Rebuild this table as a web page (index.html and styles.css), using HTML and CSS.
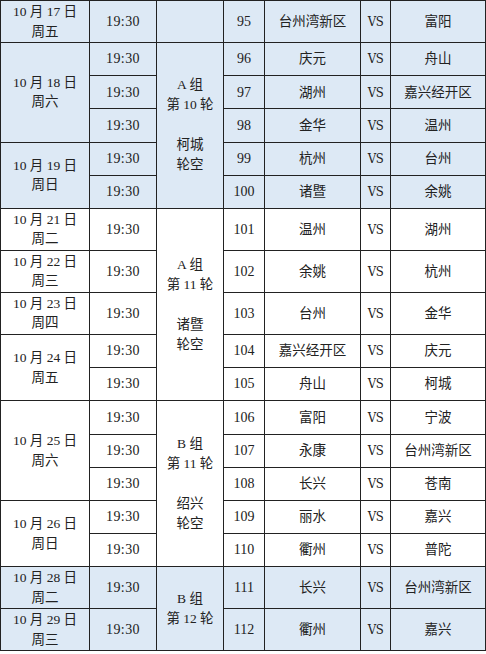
FILE: index.html
```html
<!DOCTYPE html>
<html lang="zh-CN">
<head>
<meta charset="utf-8">
<title>赛程表</title>
<link rel="stylesheet" href="styles.css">
</head>
<body>
<table class="schedule">
  <colgroup>
    <col class="c-date"><col class="c-time"><col class="c-group"><col class="c-num"><col class="c-team"><col class="c-vs"><col class="c-team2">
  </colgroup>
  <tbody>
    <tr class="d blue">
      <td>10 月 17 日<br>周五</td><td class="t">19:30</td><td></td><td class="n">95</td><td>台州湾新区</td><td class="vs">VS</td><td>富阳</td>
    </tr>
    <tr class="s blue">
      <td rowspan="3">10 月 18 日<br>周六</td><td class="t">19:30</td><td rowspan="5" class="g">A 组<br>第 10 轮<br><br>柯城<br>轮空</td><td class="n">96</td><td>庆元</td><td class="vs">VS</td><td>舟山</td>
    </tr>
    <tr class="s blue">
      <td class="t">19:30</td><td class="n">97</td><td>湖州</td><td class="vs">VS</td><td>嘉兴经开区</td>
    </tr>
    <tr class="s blue">
      <td class="t">19:30</td><td class="n">98</td><td>金华</td><td class="vs">VS</td><td>温州</td>
    </tr>
    <tr class="s blue">
      <td rowspan="2">10 月 19 日<br>周日</td><td class="t">19:30</td><td class="n">99</td><td>杭州</td><td class="vs">VS</td><td>台州</td>
    </tr>
    <tr class="s blue">
      <td class="t">19:30</td><td class="n">100</td><td>诸暨</td><td class="vs">VS</td><td>余姚</td>
    </tr>
    <tr class="d">
      <td>10 月 21 日<br>周二</td><td class="t">19:30</td><td rowspan="5" class="g">A 组<br>第 11 轮<br><br>诸暨<br>轮空</td><td class="n">101</td><td>温州</td><td class="vs">VS</td><td>湖州</td>
    </tr>
    <tr class="d">
      <td>10 月 22 日<br>周三</td><td class="t">19:30</td><td class="n">102</td><td>余姚</td><td class="vs">VS</td><td>杭州</td>
    </tr>
    <tr class="d">
      <td>10 月 23 日<br>周四</td><td class="t">19:30</td><td class="n">103</td><td>台州</td><td class="vs">VS</td><td>金华</td>
    </tr>
    <tr class="s">
      <td rowspan="2">10 月 24 日<br>周五</td><td class="t">19:30</td><td class="n">104</td><td>嘉兴经开区</td><td class="vs">VS</td><td>庆元</td>
    </tr>
    <tr class="s">
      <td class="t">19:30</td><td class="n">105</td><td>舟山</td><td class="vs">VS</td><td>柯城</td>
    </tr>
    <tr class="s">
      <td rowspan="3">10 月 25 日<br>周六</td><td class="t">19:30</td><td rowspan="5" class="g">B 组<br>第 11 轮<br><br>绍兴<br>轮空</td><td class="n">106</td><td>富阳</td><td class="vs">VS</td><td>宁波</td>
    </tr>
    <tr class="s">
      <td class="t">19:30</td><td class="n">107</td><td>永康</td><td class="vs">VS</td><td>台州湾新区</td>
    </tr>
    <tr class="s">
      <td class="t">19:30</td><td class="n">108</td><td>长兴</td><td class="vs">VS</td><td>苍南</td>
    </tr>
    <tr class="s">
      <td rowspan="2">10 月 26 日<br>周日</td><td class="t">19:30</td><td class="n">109</td><td>丽水</td><td class="vs">VS</td><td>嘉兴</td>
    </tr>
    <tr class="s">
      <td class="t">19:30</td><td class="n">110</td><td>衢州</td><td class="vs">VS</td><td>普陀</td>
    </tr>
    <tr class="d blue">
      <td>10 月 28 日<br>周二</td><td class="t">19:30</td><td rowspan="2" class="g">B 组<br>第 12 轮</td><td class="n">111</td><td>长兴</td><td class="vs">VS</td><td>台州湾新区</td>
    </tr>
    <tr class="d blue">
      <td>10 月 29 日<br>周三</td><td class="t">19:30</td><td class="n">112</td><td>衢州</td><td class="vs">VS</td><td>嘉兴</td>
    </tr>
  </tbody>
</table>
</body>
</html>
```

FILE: styles.css
```css
html, body {
  margin: 0;
  padding: 0;
  background: #ffffff;
}

body {
  font-family: "Liberation Serif", "Noto Sans CJK SC", serif;
  font-size: 13.5px;
  color: #222222;
}

.schedule {
  border-collapse: collapse;
  table-layout: fixed;
  width: 486px;
}

.c-date { width: 89px; }
.c-time { width: 67px; }
.c-group { width: 67px; }
.c-num { width: 41px; }
.c-team { width: 96px; }
.c-vs { width: 30px; }
.c-team2 { width: 95px; }

.schedule td {
  border: 1px solid #222222;
  padding: 0;
  text-align: center;
  vertical-align: middle;
  line-height: 19.5px;
  white-space: nowrap;
  overflow: hidden;
}

.schedule tr.s { height: 33.2px; }
.schedule tr.d { height: 42px; }

.schedule tr.blue td { background: #dde9f5; }

.schedule td.t {
  font-size: 14px;
  letter-spacing: 0.4px;
}

.schedule td.n {
  font-size: 14px;
}

.schedule td.vs {
  font-family: "DejaVu Serif Condensed", "Liberation Serif", serif;
  font-stretch: condensed;
  font-size: 13px;
  letter-spacing: -0.5px;
}

.schedule td.g {
  line-height: 20px;
}
```
